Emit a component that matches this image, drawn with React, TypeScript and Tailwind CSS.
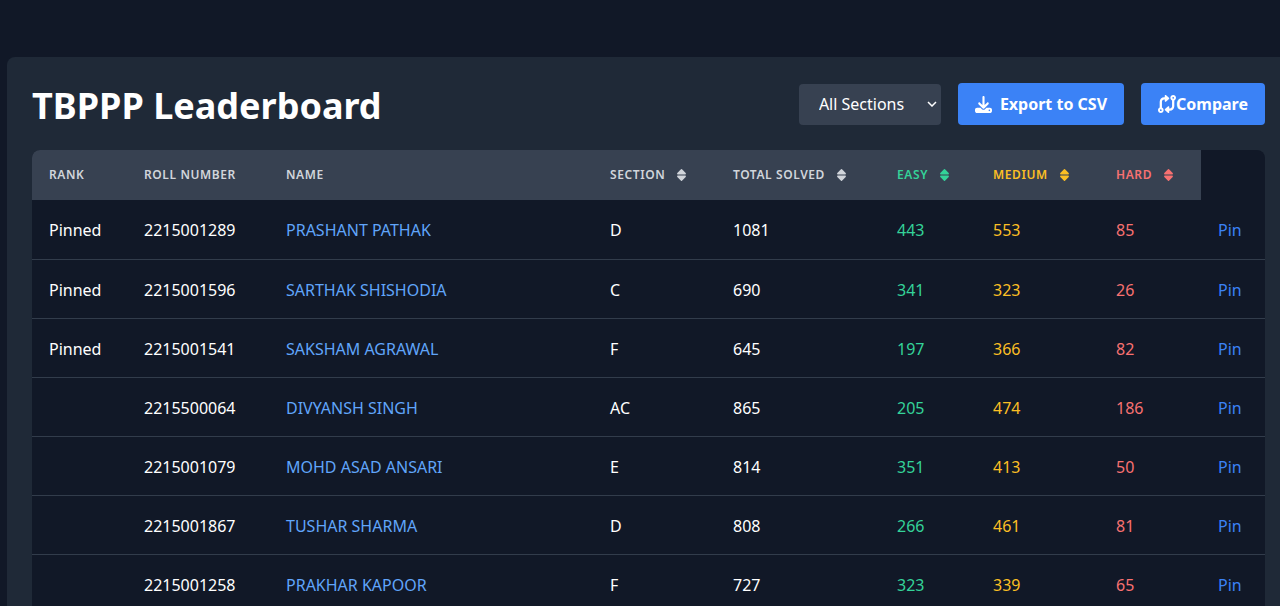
import { useState } from "react";
import { FaCodeCompare, FaDownload } from "react-icons/fa6";

type Student = {
  rank: string;
  roll: string;
  name: string;
  section: string;
  total: number;
  easy: number;
  medium: number;
  hard: number;
};

const students: Student[] = [
  { rank: "Pinned", roll: "2215001289", name: "PRASHANT PATHAK", section: "D", total: 1081, easy: 443, medium: 553, hard: 85 },
  { rank: "Pinned", roll: "2215001596", name: "SARTHAK SHISHODIA", section: "C", total: 690, easy: 341, medium: 323, hard: 26 },
  { rank: "Pinned", roll: "2215001541", name: "SAKSHAM AGRAWAL", section: "F", total: 645, easy: 197, medium: 366, hard: 82 },
  { rank: "", roll: "2215500064", name: "DIVYANSH SINGH", section: "AC", total: 865, easy: 205, medium: 474, hard: 186 },
  { rank: "", roll: "2215001079", name: "MOHD ASAD ANSARI", section: "E", total: 814, easy: 351, medium: 413, hard: 50 },
  { rank: "", roll: "2215001867", name: "TUSHAR SHARMA", section: "D", total: 808, easy: 266, medium: 461, hard: 81 },
  { rank: "", roll: "2215001258", name: "PRAKHAR KAPOOR", section: "F", total: 727, easy: 323, medium: 339, hard: 65 },
];

const columns = [
  { label: "RANK", width: "w-[95px]", color: "text-[#d1d5db]", sortable: false },
  { label: "ROLL NUMBER", width: "w-[142px]", color: "text-[#d1d5db]", sortable: false },
  { label: "NAME", width: "", color: "text-[#d1d5db]", sortable: false },
  { label: "SECTION", width: "w-[123px]", color: "text-[#d1d5db]", sortable: true },
  { label: "TOTAL SOLVED", width: "w-[164px]", color: "text-[#d1d5db]", sortable: true },
  { label: "EASY", width: "w-[96px]", color: "text-[#34d399]", sortable: true },
  { label: "MEDIUM", width: "w-[123px]", color: "text-[#fbbf24]", sortable: true },
  { label: "HARD", width: "w-[102px]", color: "text-[#f87171]", sortable: true },
];

function SortIcon() {
  return (
    <svg viewBox="0 0 9 12" className="h-[12px] w-[9px]" fill="currentColor" aria-hidden="true">
      <path d="M4 0.3Q4.5 -0.2 5 0.3L8.7 4Q9.3 5.4 8.2 5.4H0.8Q-0.3 5.4 0.3 4Z" />
      <path d="M4 11.7Q4.5 12.2 5 11.7L8.7 8Q9.3 6.6 8.2 6.6H0.8Q-0.3 6.6 0.3 8Z" />
    </svg>
  );
}

export default function App() {
  const [section, setSection] = useState("All Sections");

  return (
    <div className="h-screen overflow-hidden bg-[#111827] pt-[57px] pl-[7px] font-['Noto_Sans','Segoe_UI',sans-serif] text-base text-white">
      <main className="min-h-full rounded-tl-lg bg-[#1f2937] pt-[26px] pr-[15px] pl-[25px]">
        <header className="mb-[25px] flex items-center justify-between">
          <h1 className="pt-1 text-4xl leading-[38px] font-bold">TBPPP Leaderboard</h1>
          <div className="flex items-center gap-[17px]">
            <div className="relative">
              <select
                aria-label="Section"
                value={section}
                onChange={(e) => setSection(e.target.value)}
                className="block h-[41px] w-[142px] appearance-none rounded bg-[#374151] pl-5"
              >
                <option>All Sections</option>
                <option>AC</option>
                <option>C</option>
                <option>D</option>
                <option>E</option>
                <option>F</option>
              </select>
              <svg
                viewBox="0 0 10 6"
                className="pointer-events-none absolute top-[17px] right-1 h-[6px] w-[10px]"
                fill="none"
                stroke="currentColor"
                strokeWidth="1.5"
              >
                <path d="M1 1l4 4 4-4" />
              </svg>
            </div>
            <button className="flex h-[42px] items-center gap-2 rounded bg-[#3b82f6] px-[17px] font-bold">
              <FaDownload className="size-[17px]" />
              Export to CSV
            </button>
            <button className="flex h-[42px] items-center rounded bg-[#3b82f6] px-[17px] font-bold">
              <FaCodeCompare className="size-[18px]" />
              Compare
            </button>
          </div>
        </header>

        <div className="overflow-hidden rounded-lg bg-[#111827]">
          <table className="w-full table-fixed text-left">
            <thead>
              <tr className="h-[50px]">
                {columns.map((c) => (
                  <th
                    key={c.label}
                    scope="col"
                    className={`bg-[#374151] pl-[17px] text-xs font-semibold tracking-wider whitespace-nowrap ${c.width} ${c.color}`}
                  >
                    {c.sortable ? (
                      <button className="flex items-center gap-3 tracking-wider">
                        {c.label}
                        <SortIcon />
                      </button>
                    ) : (
                      c.label
                    )}
                  </th>
                ))}
                <td className="w-[64px]" />
              </tr>
            </thead>
            <tbody>
              {students.map((s) => (
                <tr key={s.roll} className="h-[59px] border-b border-[#323c4b] *:pt-0.5 *:pl-[17px]">
                  <td>{s.rank}</td>
                  <td>{s.roll}</td>
                  <td>
                    <a href="#" className="text-[#60a5fa]">{s.name}</a>
                  </td>
                  <td>{s.section}</td>
                  <td>{s.total}</td>
                  <td className="text-[#34d399]">{s.easy}</td>
                  <td className="text-[#fbbf24]">{s.medium}</td>
                  <td className="text-[#f87171]">{s.hard}</td>
                  <td>
                    <button className="text-[#3b82f6]">Pin</button>
                  </td>
                </tr>
              ))}
            </tbody>
          </table>
        </div>
      </main>
    </div>
  );
}
